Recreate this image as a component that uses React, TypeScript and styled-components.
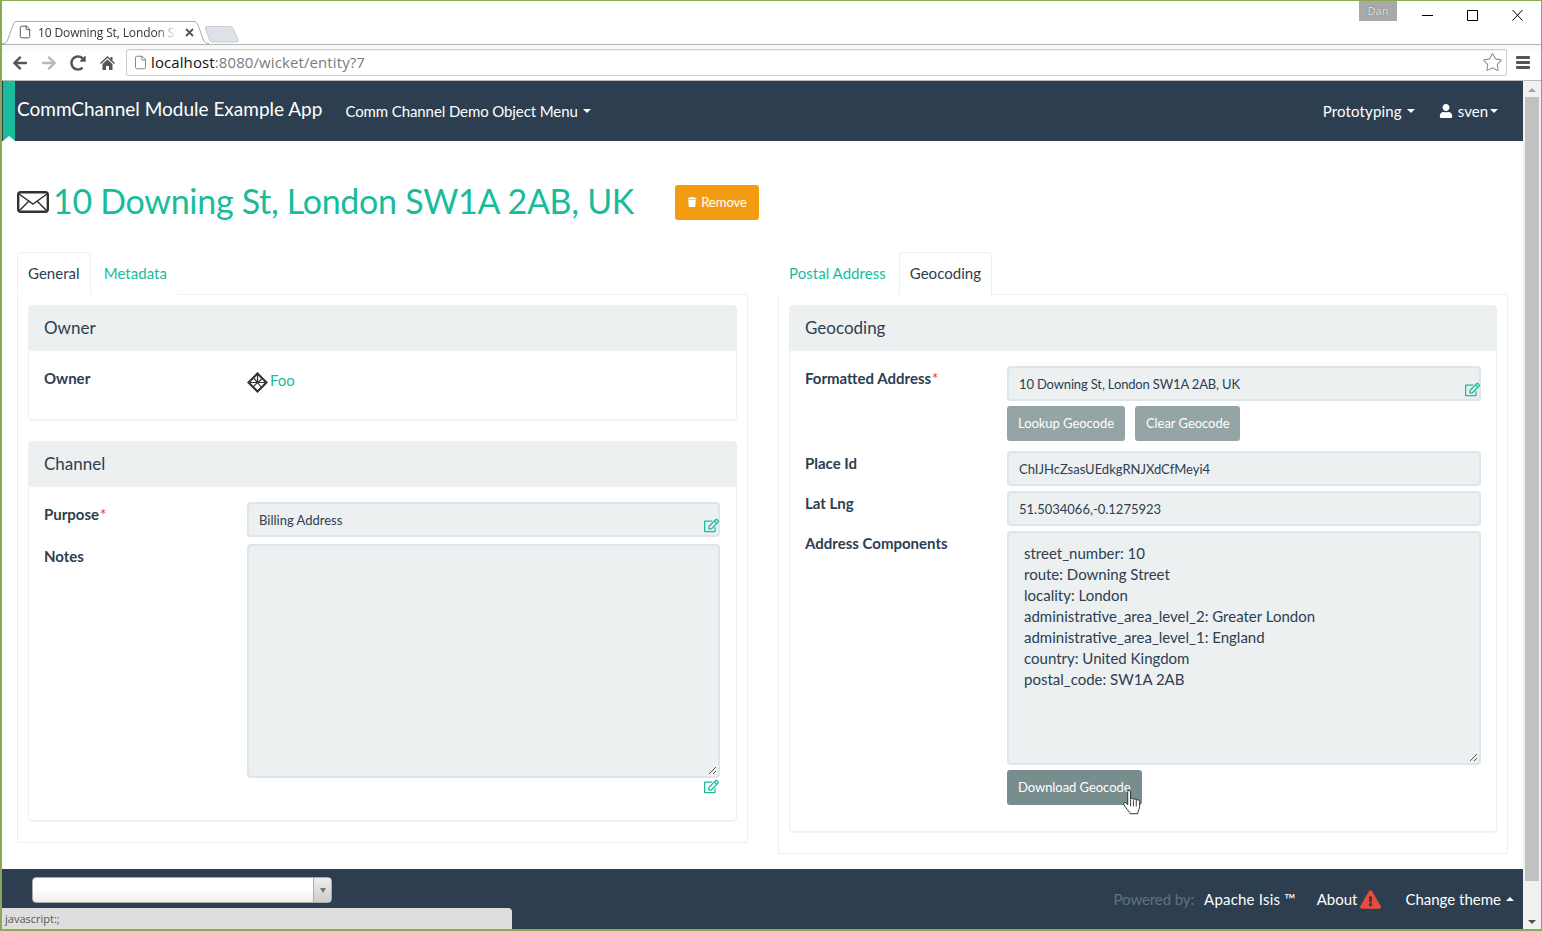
import styled, { createGlobalStyle } from 'styled-components'
import { FaArrowLeft, FaArrowRight, FaExclamationTriangle, FaRedoAlt, FaRegEdit, FaTrash, FaUser } from 'react-icons/fa'
import { File, Star } from 'lucide-react'

const GlobalStyle = createGlobalStyle`
  html, body {
    margin: 0;
    height: 100%;
    overflow: hidden;
    background: #fff;
    font-family: Lato, "Open Sans", sans-serif;
    font-size: 15px;
    color: #2c3e50;
  }
  * {
    box-sizing: border-box;
  }
`

const Frame = styled.div`
  width: 1542px;
  height: 931px;
  display: flex;
  flex-direction: column;
  position: relative;
  overflow: hidden;
  border: 1px solid #8aa957;
  border-left-width: 2px;
  border-bottom-width: 2px;
`

const TabStrip = styled.div`
  height: 43px;
  flex: none;
  position: relative;
  display: flex;
  justify-content: flex-end;
`

const TabShape = styled.svg`
  position: absolute;
  left: -2px;
  top: 0;
`

const TabTitle = styled.div`
  position: absolute;
  left: 36px;
  top: 24px;
  width: 139px;
  font: 12px/16px "Open Sans", sans-serif;
  letter-spacing: -0.12px;
  color: #333;
  white-space: nowrap;
  overflow: hidden;
  mask-image: linear-gradient(to right, #000 85%, transparent);
`

const TabFile = styled(File)`
  position: absolute;
  left: 16px;
  top: 24px;
  color: #444;
`

const TabClose = styled.svg`
  position: absolute;
  left: 183px;
  top: 27px;
`

const UserBadge = styled.div`
  width: 38px;
  height: 20px;
  background: #a9a9a9;
  color: #f0f0f0;
  font: 11px/20px "Open Sans", sans-serif;
  text-align: center;
  margin-right: 25px;
  text-shadow: 0 0 1px #444;
`

const WindowButton = styled.svg`
  display: block;
  flex: none;
  margin-top: 4px;
  margin-right: 34px;
  &:last-child {
    margin-right: 18px;
  }
`

const Toolbar = styled.div`
  height: 37px;
  flex: none;
  display: flex;
  align-items: center;
  padding: 0 8px 0 10px;
  background: linear-gradient(#f7f7f7, #fff 30%);
  border-top: 1px solid #b4b4b4;
  border-bottom: 1px solid #bcbcbc;
`

const NavIcon = styled.span<{ $faded?: boolean; $w?: number }>`
  width: ${p => p.$w ?? 29}px;
  flex: none;
  display: flex;
  color: ${p => (p.$faded ? '#b8b8b8' : '#555')};
  font-size: 16px;
`

const Omnibox = styled.div`
  flex: 1;
  height: 27px;
  margin: 0 9px 0 0;
  border: 1px solid #cdcdcd;
  border-radius: 2px;
  background: #fff;
  display: flex;
  align-items: center;
  padding: 0 3px 0 6px;
  box-shadow: inset 0 1px 1px #eee;
`

const PageGlyph = styled(File)`
  color: #777;
  flex: none;
`

const Url = styled.div`
  flex: 1;
  margin-left: 3px;
  font: 15px/25px "Open Sans", sans-serif;
  letter-spacing: 0.1px;
  color: #7b7b7b;
  span {
    color: #111;
  }
`

const BookmarkStar = styled(Star)`
  color: #8b8b8b;
  flex: none;
`

const Burger = styled.div`
  width: 14px;
  height: 13px;
  flex: none;
  display: flex;
  flex-direction: column;
  justify-content: space-between;
  margin-right: 3px;
  i {
    display: block;
    height: 3px;
    background: #555;
    border-radius: 1px;
  }
`

const Viewport = styled.div`
  flex: 1;
  min-height: 0;
  display: flex;
`

const Page = styled.div`
  flex: 1;
  min-width: 0;
  display: flex;
  flex-direction: column;
`

const Navbar = styled.nav`
  height: 60px;
  flex: none;
  position: relative;
  display: flex;
  align-items: center;
  background: #2c3e50;
  color: #fff;
  padding: 0 25px 0 15px;
`

const Ribbon = styled.div`
  position: absolute;
  left: 1px;
  top: 0;
  width: 12px;
  height: 60px;
  background: #18bc9c;
  &::after {
    content: '';
    position: absolute;
    left: 0;
    bottom: 0;
    width: 12px;
    height: 5px;
    background: #fff;
    clip-path: polygon(50% 0, 100% 100%, 0 100%);
  }
`

const Brand = styled.div`
  font-size: 19px;
  margin-right: 23px;
  padding-bottom: 6px;
  white-space: nowrap;
`

const NavLink = styled.div<{ $left?: number; $spacing?: number }>`
  display: flex;
  align-items: center;
  margin-left: ${p => p.$left ?? 0}px;
  font-size: 15px;
  letter-spacing: ${p => p.$spacing ?? 0}px;
  gap: 5px;
  white-space: nowrap;
`

const Caret = styled.i<{ $up?: boolean; $pull?: boolean }>`
  display: block;
  width: 0;
  height: 0;
  margin-left: ${p => (p.$pull ? -3 : 0)}px;
  border-left: 4px solid transparent;
  border-right: 4px solid transparent;
  ${p => (p.$up ? 'border-bottom: 4px solid #fff;' : 'border-top: 4px solid #fff;')}
`

const NavSpacer = styled.div`
  flex: 1;
`

const Content = styled.main`
  flex: 1;
  min-height: 0;
  padding: 0 15px;
`

const TitleRow = styled.div`
  height: 111px;
  display: flex;
  align-items: center;
  padding-top: 11px;
`

const TitleText = styled.h1`
  margin: 0 41px 3px 4px;
  font-size: 34px;
  font-weight: 400;
  letter-spacing: -0.3px;
  color: #18bc9c;
  white-space: nowrap;
`

const RemoveButton = styled.div`
  width: 84px;
  height: 35px;
  background: #f39c12;
  color: #fff;
  font-size: 13px;
  border-radius: 3px;
  display: flex;
  align-items: center;
  justify-content: center;
  gap: 4px;
`

const Columns = styled.div`
  display: grid;
  grid-template-columns: 731px 730px;
  gap: 30px;
  align-items: start;
`

const Tabs = styled.div`
  height: 43px;
  display: flex;
  border-bottom: 1px solid #ecf0f1;
`

const TabLink = styled.div<{ $active?: boolean }>`
  height: 43px;
  padding: 0 10px 2px;
  display: flex;
  align-items: center;
  margin-right: 2px;
  letter-spacing: 0.04px;
  color: ${p => (p.$active ? '#2c3e50' : '#18bc9c')};
  background: #fff;
  border-radius: 4px 4px 0 0;
  border: 1px solid ${p => (p.$active ? '#ecf0f1' : 'transparent')};
  border-bottom-color: ${p => (p.$active ? '#fff' : 'transparent')};
`

const Pane = styled.div`
  border: 1px solid #ecf0f1;
  border-top: 0;
  padding: 10px 10px 0;
`

const Panel = styled.section`
  border: 1px solid #ecf0f1;
  border-radius: 4px;
  margin-bottom: 21px;
  box-shadow: 0 1px 1px rgba(0, 0, 0, 0.05);
`

const PanelHeading = styled.h3`
  margin: 0;
  height: 45px;
  padding: 0 15px 2px;
  display: flex;
  align-items: center;
  background: #ecf0f1;
  font-size: 17px;
  font-weight: 400;
`

const PanelBody = styled.div<{ $bottom: number; $right?: number }>`
  padding: 15px ${p => p.$right ?? 16}px ${p => p.$bottom}px 15px;
`

const FormRow = styled.div<{ $top?: number; $label?: number }>`
  display: grid;
  grid-template-columns: ${p => p.$label ?? 203}px 1fr;
  margin-top: ${p => p.$top ?? 0}px;
`

const Label = styled.div`
  font-weight: 700;
  line-height: 21px;
  padding-top: 2px;
  em {
    color: #e31c3d;
    font-style: normal;
    font-weight: 400;
    line-height: 1;
    margin-left: 1px;
  }
`

const Field = styled.div`
  position: relative;
`

const ReadOnly = styled.div<{ $height?: number; $tight?: boolean }>`
  height: ${p => p.$height ?? 35}px;
  background: #ecf0f1;
  border: 2px solid #dce4ec;
  border-radius: 4px;
  padding: 0 10px;
  font-size: 13px;
  line-height: 33px;
  letter-spacing: ${p => (p.$tight ? -0.15 : 0)}px;
  color: #2c3e50;
`

const AddressBlock = styled(ReadOnly)`
  position: relative;
  padding: 10px 15px;
  font-size: 15px;
  line-height: 21px;
  white-space: pre-line;
`

const Grip = styled.svg`
  position: absolute;
  right: 1px;
  bottom: 1px;
`

const EditMark = styled(FaRegEdit)<{ $below?: boolean }>`
  position: absolute;
  right: 1px;
  bottom: ${p => (p.$below ? 0 : 4)}px;
  color: #18bc9c;
  font-size: 15px;
`

const NoteSlot = styled(Field)`
  padding-bottom: 16px;
`

const ActionRow = styled.div`
  display: flex;
  gap: 10px;
  margin-top: 5px;
`

const GreyButton = styled.div<{ $hover?: boolean }>`
  height: 35px;
  padding: 0 11px 2px;
  position: relative;
  display: flex;
  align-items: center;
  letter-spacing: -0.05px;
  background: ${p => (p.$hover ? '#798d8f' : '#95a5a6')};
  color: #fff;
  font-size: 13px;
  border-radius: 3px;
`

const HandCursor = styled.svg`
  position: absolute;
  left: 116px;
  top: 20px;
`

const OwnerValue = styled.div`
  min-height: 39px;
  display: flex;
  align-items: flex-start;
  gap: 2px;
  padding-top: 4px;
  color: #18bc9c;
  line-height: 20px;
`

const OwnerGlyph = styled.svg`
  margin-top: 2px;
  flex: none;
`

const Footer = styled.footer`
  height: 60px;
  flex: none;
  display: flex;
  background: #2c3e50;
  color: #fff;
  padding: 8px 9px 0 30px;
`

const ThemeSelect = styled.div`
  width: 300px;
  height: 26px;
  border: 1px solid #aaa;
  border-radius: 4px;
  background: linear-gradient(#fff 50%, #eee);
  display: flex;
  justify-content: flex-end;
  overflow: hidden;
`

const SelectArrow = styled.div`
  width: 18px;
  border-left: 1px solid #aaa;
  background: linear-gradient(#eee, #ccc);
  display: flex;
  align-items: center;
  justify-content: center;
  &::after {
    content: '';
    border-left: 3px solid transparent;
    border-right: 3px solid transparent;
    border-top: 5px solid #777;
  }
`

const FooterLinks = styled.div`
  margin-left: auto;
  height: 30px;
  margin-top: 7px;
  display: flex;
  align-items: center;
  white-space: nowrap;
`

const PoweredBy = styled.span`
  color: #62717f;
  margin-right: 10px;
  letter-spacing: -0.1px;
`

const AlertIcon = styled(FaExclamationTriangle)`
  color: #e74c3c;
  font-size: 21px;
  margin-left: 3px;
`

const StatusBubble = styled.div`
  position: absolute;
  left: 0;
  bottom: 0;
  width: 510px;
  height: 21px;
  background: #dedede;
  border-radius: 0 4px 0 0;
  padding-left: 3px;
  font: 11px/21px "Open Sans", sans-serif;
  color: #555;
`

const Scrollbar = styled.div`
  width: 18px;
  flex: none;
  background: #f1f1f1;
  display: flex;
  flex-direction: column;
  align-items: center;
`

const ScrollArrow = styled.i<{ $down?: boolean }>`
  display: block;
  flex: none;
  width: 0;
  height: 0;
  margin: 7px 0 5px;
  border-left: 4px solid transparent;
  border-right: 4px solid transparent;
  ${p => (p.$down ? 'border-top: 4px solid #505050;' : 'border-bottom: 4px solid #a3a3a3;')}
`

const ScrollThumb = styled.div`
  width: 14px;
  flex: 1;
  background: #c1c1c1;
  margin: 0 0 32px;
`

const ADDRESS = `street_number: 10
route: Downing Street
locality: London
administrative_area_level_2: Greater London
administrative_area_level_1: England
country: United Kingdom
postal_code: SW1A 2AB`

const ResizeGrip = () => (
  <Grip width="9" height="9" viewBox="0 0 9 9">
    <path d="M1 8 8 1M5 8 8 5" stroke="#555" fill="none" />
  </Grip>
)

const BrowserChrome = () => (
  <>
    <TabStrip>
      <TabShape width="242" height="43" viewBox="0 0 242 43">
        <path d="M0 42.500h3C6 42.500 7 41 8 38L13 24c1-3 2-3.500 5-3.500h175c3 0 4 1 5 3.500l5 14c1 3 3 4.500 6 4.500" fill="#fff" stroke="#aaa" />
        <path d="M207 25.500h22c2 0 3 .5 4 2l5 11c.5 2 0 2.500-2 2.500h-24c-1 0-2-.5-2.500-2l-4-11c-.5-1.500 0-2.500 1.500-2.500z" fill="#dee1e8" stroke="#c9ccd3" />
      </TabShape>
      <TabFile size={14} strokeWidth={1.5} />
      <TabTitle>10 Downing St, London SW1A 2AB, UK</TabTitle>
      <TabClose width="9" height="9" viewBox="0 0 9 9">
        <path d="M1 1 8 8M8 1 1 8" stroke="#555" strokeWidth="1.8" />
      </TabClose>
      <UserBadge>Dan</UserBadge>
      <WindowButton width="11" height="20" viewBox="0 0 11 20">
        <path d="M0 10.500h11" stroke="#000" />
      </WindowButton>
      <WindowButton width="11" height="20" viewBox="0 0 11 20">
        <path d="M.5 5.500h10v10H.5z" stroke="#000" fill="none" />
      </WindowButton>
      <WindowButton width="11" height="20" viewBox="0 0 11 20">
        <path d="M.5 5 10.500 15.500M10.500 5 .5 15.500" stroke="#000" fill="none" />
      </WindowButton>
    </TabStrip>
    <Toolbar>
      <NavIcon><FaArrowLeft /></NavIcon>
      <NavIcon $faded><FaArrowRight /></NavIcon>
      <NavIcon $w={30}><FaRedoAlt /></NavIcon>
      <NavIcon $w={26}>
        <svg width="15" height="16" viewBox="0 0 15 16">
          <path d="M7.500 1 0 8l1 1 6.500-6 6.500 6 1-1-2.500-2.300V2h-2v1.900z" fill="#555" />
          <path d="M2.500 9 7.500 4.500 12.500 9v6H9v-4H6v4H2.500z" fill="#555" />
        </svg>
      </NavIcon>
      <Omnibox>
        <PageGlyph size={15} strokeWidth={1.4} />
        <Url><span>localhost</span>:8080/wicket/entity?7</Url>
        <BookmarkStar size={21} strokeWidth={1.2} />
      </Omnibox>
      <Burger><i /><i /><i /></Burger>
    </Toolbar>
  </>
)

const App = () => {
  return (
    <Frame>
      <GlobalStyle />
      <BrowserChrome />
      <Viewport>
        <Page>
          <Navbar>
            <Ribbon />
            <Brand>CommChannel Module Example App</Brand>
            <NavLink $spacing={-0.1}>Comm Channel Demo Object Menu <Caret /></NavLink>
            <NavSpacer />
            <NavLink $spacing={0.15}>Prototyping <Caret /></NavLink>
            <NavLink $left={24}>
              <FaUser size={14} />
              <span>sven</span>
              <Caret $pull />
            </NavLink>
          </Navbar>
          <Content>
            <TitleRow>
              <svg width="32" height="22" viewBox="0 0 32 22">
                <rect x="1.200" y="1.200" width="29.600" height="19.600" rx="2.500" fill="#fff" stroke="#333" strokeWidth="2.400" />
                <path d="M2 3 16 13 30 3M2 20 12 10M30 20 20 10" stroke="#333" strokeWidth="1.500" fill="none" />
              </svg>
              <TitleText>10 Downing St, London SW1A 2AB, UK</TitleText>
              <RemoveButton><FaTrash size={10} />Remove</RemoveButton>
            </TitleRow>
            <Columns>
              <div>
                <Tabs>
                  <TabLink $active>General</TabLink>
                  <TabLink>Metadata</TabLink>
                </Tabs>
                <Pane>
                  <Panel>
                    <PanelHeading>Owner</PanelHeading>
                    <PanelBody $bottom={14}>
                      <FormRow>
                        <Label>Owner</Label>
                        <OwnerValue>
                          <OwnerGlyph width="21" height="21" viewBox="0 0 21 21">
                            <path d="M10.500 1.500 19.500 10.500 10.500 19.500 1.500 10.500z" fill="#fff" stroke="#333" strokeWidth="2.200" />
                            <path d="M2 10.500h17M10.500 2v8.500L7 6.500M11 10.500l3.500-3.500M10.500 10.500 6 15M10.500 10.500l4 5" stroke="#333" strokeWidth="1.200" fill="none" />
                          </OwnerGlyph>
                          Foo
                        </OwnerValue>
                      </FormRow>
                    </PanelBody>
                  </Panel>
                  <Panel>
                    <PanelHeading>Channel</PanelHeading>
                    <PanelBody $bottom={26}>
                      <FormRow>
                        <Label>Purpose<em>*</em></Label>
                        <Field>
                          <ReadOnly>Billing Address</ReadOnly>
                          <EditMark />
                        </Field>
                      </FormRow>
                      <FormRow $top={7}>
                        <Label>Notes</Label>
                        <NoteSlot>
                          <AddressBlock $height={234}><ResizeGrip /></AddressBlock>
                          <EditMark $below />
                        </NoteSlot>
                      </FormRow>
                    </PanelBody>
                  </Panel>
                </Pane>
              </div>
              <div>
                <Tabs>
                  <TabLink>Postal Address</TabLink>
                  <TabLink $active>Geocoding</TabLink>
                </Tabs>
                <Pane>
                  <Panel>
                    <PanelHeading>Geocoding</PanelHeading>
                    <PanelBody $bottom={26} $right={15}>
                      <FormRow $label={202}>
                        <Label>Formatted Address<em>*</em></Label>
                        <div>
                          <Field>
                            <ReadOnly $tight>10 Downing St, London SW1A 2AB, UK</ReadOnly>
                            <EditMark />
                          </Field>
                          <ActionRow>
                            <GreyButton>Lookup Geocode</GreyButton>
                            <GreyButton>Clear Geocode</GreyButton>
                          </ActionRow>
                        </div>
                      </FormRow>
                      <FormRow $top={10} $label={202}>
                        <Label>Place Id</Label>
                        <ReadOnly>ChIJHcZsasUEdkgRNJXdCfMeyi4</ReadOnly>
                      </FormRow>
                      <FormRow $top={5} $label={202}>
                        <Label>Lat Lng</Label>
                        <ReadOnly>51.5034066,-0.1275923</ReadOnly>
                      </FormRow>
                      <FormRow $top={5} $label={202}>
                        <Label>Address Components</Label>
                        <div>
                          <AddressBlock $height={234}>
                            {ADDRESS}
                            <ResizeGrip />
                          </AddressBlock>
                          <ActionRow>
                            <GreyButton $hover>
                              Download Geocode
                              <HandCursor width="18" height="25" viewBox="0 0 19 29" preserveAspectRatio="none">
                                <path d="M5 2c0-1 .7-1.500 1.500-1.500S8 1 8 2v8.500c.5-1 3-1 3 .5 .5-1 3-1 3 .8 .5-.8 3.500-.8 3.500 1.200v6c0 3-1.500 4-2 8.500H7.500c-.5-2-2.500-4-4.500-7L1 17c-1-2 1-3 2.500-1.500L5 17z" fill="#fff" stroke="#222" strokeWidth="1" />
                                <path d="M8 11v8M11 12v7M14 12v7" stroke="#222" strokeWidth="1" />
                              </HandCursor>
                            </GreyButton>
                          </ActionRow>
                        </div>
                      </FormRow>
                    </PanelBody>
                  </Panel>
                </Pane>
              </div>
            </Columns>
          </Content>
          <Footer>
            <ThemeSelect><SelectArrow /></ThemeSelect>
            <FooterLinks>
              <PoweredBy>Powered by:</PoweredBy>
              <NavLink $spacing={0.2}>Apache Isis ™</NavLink>
              <NavLink $left={21}>About</NavLink>
              <AlertIcon />
              <NavLink $left={24}>Change theme <Caret $up /></NavLink>
            </FooterLinks>
          </Footer>
        </Page>
        <Scrollbar>
          <ScrollArrow />
          <ScrollThumb />
          <ScrollArrow $down />
        </Scrollbar>
      </Viewport>
      <StatusBubble>javascript:;</StatusBubble>
    </Frame>
  )
}

export default App
